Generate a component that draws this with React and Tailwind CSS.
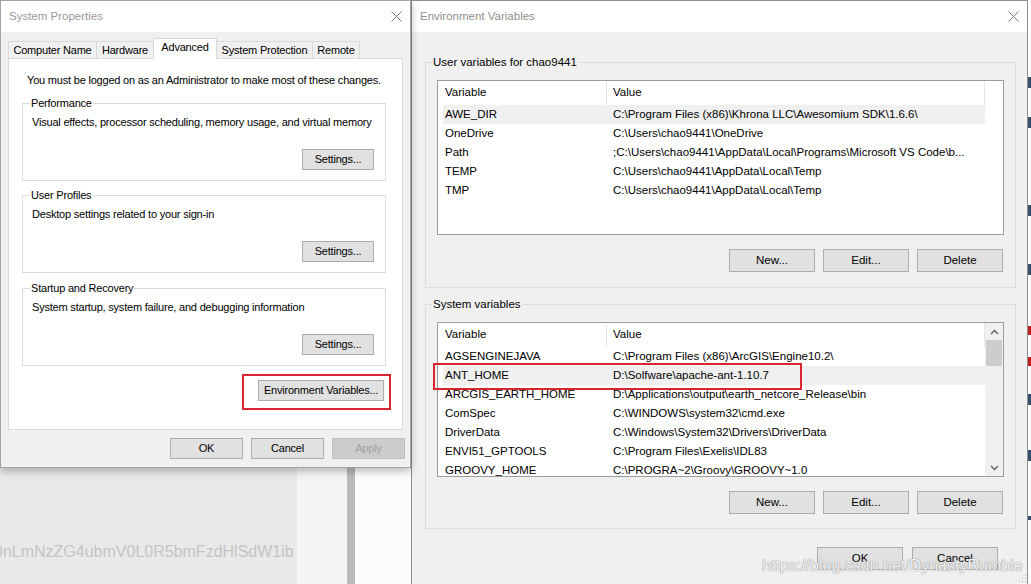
import React from "react";

const userVars = [
  ["AWE_DIR", String.raw`C:\Program Files (x86)\Khrona LLC\Awesomium SDK\1.6.6\ `.trim(), true],
  ["OneDrive", String.raw`C:\Users\chao9441\OneDrive`, false],
  ["Path", String.raw`;C:\Users\chao9441\AppData\Local\Programs\Microsoft VS Code\b...`, false],
  ["TEMP", String.raw`C:\Users\chao9441\AppData\Local\Temp`, false],
  ["TMP", String.raw`C:\Users\chao9441\AppData\Local\Temp`, false],
];

const sysVars = [
  ["AGSENGINEJAVA", String.raw`C:\Program Files (x86)\ArcGIS\Engine10.2\ `.trim(), false],
  ["ANT_HOME", String.raw`D:\Solfware\apache-ant-1.10.7`, true],
  ["ARCGIS_EARTH_HOME", String.raw`D:\Applications\output\earth_netcore_Release\bin`, false],
  ["ComSpec", String.raw`C:\WINDOWS\system32\cmd.exe`, false],
  ["DriverData", String.raw`C:\Windows\System32\Drivers\DriverData`, false],
  ["ENVI51_GPTOOLS", String.raw`C:\Program Files\Exelis\IDL83`, false],
  ["GROOVY_HOME", String.raw`C:\PROGRA~2\Groovy\GROOVY~1.0`, false],
];

function CloseX() {
  return (
    <svg width="11" height="11" viewBox="0 0 11 11" className="block">
      <path d="M0.5 0.5 L10.5 10.5 M10.5 0.5 L0.5 10.5" stroke="#7a7a7a" strokeWidth="1" fill="none" />
    </svg>
  );
}

function Chevron({ up }) {
  return (
    <svg width="9" height="6" viewBox="0 0 9 6" className="block">
      <path
        d={up ? "M1 5 L4.5 1.5 L8 5" : "M1 1 L4.5 4.5 L8 1"}
        stroke="#606060"
        strokeWidth="1.3"
        fill="none"
      />
    </svg>
  );
}

function SysGroup({ title, desc, className }) {
  return (
    <div className={"ml-[13px] w-[364px] h-[78px] border border-[#dcdcdc] flex flex-col " + className}>
      <div className="-mt-[8px] h-[14px] leading-[14px] pl-[7px]">
        <span className="bg-white px-[1px]">{title}</span>
      </div>
      <div className="mt-[5px] pl-[9px] leading-[14px] whitespace-nowrap">{desc}</div>
      <div className="mt-auto mb-[10px] self-end mr-[11px] w-[72px] h-[21px] bg-[#e1e1e1] border border-[#adadad] flex items-center justify-center">
        Settings...
      </div>
    </div>
  );
}

function SystemProperties() {
  return (
    <div className="relative z-10 h-[468px] border border-[#a3a3a3] bg-[#f0f0f0] flex flex-col shadow-[0_3px_8px_rgba(0,0,0,0.28)]">
      <div className="h-[31px] bg-white flex items-center justify-between pl-[8px] pr-[8px] text-[11.5px] text-[#999999]">
        <span>System Properties</span>
        <CloseX />
      </div>
      <div className="flex-1 pt-[6px] pl-[7px] text-[11px] tracking-[-0.2px] flex flex-col">
        <div className="flex items-end h-[20px]">
          <div className="w-[88px] h-[17px] border-t border-l border-[#d9d9d9] flex items-center justify-center">Computer Name</div>
          <div className="w-[57px] h-[17px] border-t border-l border-[#d9d9d9] flex items-center justify-center">Hardware</div>
          <div className="relative z-10 w-[64px] h-[21px] -mb-[1px] border-t border-l border-r border-[#d9d9d9] bg-white flex items-center justify-center pb-[3px]">Advanced</div>
          <div className="w-[96px] h-[17px] border-t border-r border-[#d9d9d9] flex items-center justify-center">System Protection</div>
          <div className="w-[47px] h-[17px] border-t border-r border-[#d9d9d9] flex items-center justify-center">Remote</div>
        </div>
        <div className="w-[395px] h-[372px] border border-[#d9d9d9] bg-white flex flex-col">
          <div className="mt-[14px] ml-[18px] leading-[14px] whitespace-nowrap">
            You must be logged on as an Administrator to make most of these changes.
          </div>
          <SysGroup className="mt-[16px]" title="Performance" desc="Visual effects, processor scheduling, memory usage, and virtual memory" />
          <SysGroup className="mt-[14px]" title="User Profiles" desc="Desktop settings related to your sign-in" />
          <SysGroup className="mt-[15px]" title="Startup and Recovery" desc="System startup, system failure, and debugging information" />
          <div className="self-end mt-[8px] mr-[11px] border-2 border-[#d7262e] pl-[14px] pr-[5px] pt-[4px] pb-[7px]">
            <div className="w-[126px] h-[21px] bg-[#e1e1e1] border border-[#adadad] flex items-center justify-center">
              Environment Variables...
            </div>
          </div>
        </div>
        <div className="mt-[8px] pr-[5px] flex justify-end gap-[8px]">
          <div className="w-[73px] h-[21px] bg-[#e1e1e1] border border-[#adadad] flex items-center justify-center">OK</div>
          <div className="w-[73px] h-[21px] bg-[#e1e1e1] border border-[#adadad] flex items-center justify-center">Cancel</div>
          <div className="w-[73px] h-[21px] bg-[#cccccc] border border-[#bfbfbf] text-[#a0a0a0] flex items-center justify-center">Apply</div>
        </div>
      </div>
    </div>
  );
}

function VarList({ rows, scroll, marked }) {
  return (
    <div className="relative mt-[11px] ml-[11px] w-[567px] h-[155px] border border-[#9c9c9c] bg-white flex pl-[5px]">
      <div className="w-[542px] flex flex-col overflow-hidden">
        <div className="h-[24px] shrink-0 flex">
          <div className="w-[164px] border-r border-[#e5e5e5] pl-[2px] flex items-center">Variable</div>
          <div className="flex-1 border-r border-[#e5e5e5] pl-[6px] flex items-center">Value</div>
        </div>
        {rows.map(([k, v, hi]) => (
          <div key={k} className={"h-[19px] shrink-0 flex items-center whitespace-nowrap " + (hi ? "bg-[#f0f0f0]" : "")}>
            <div className="w-[164px] pl-[2px]">{k}</div>
            <div className="flex-1 pl-[6px] overflow-hidden">{v}</div>
          </div>
        ))}
      </div>
      {scroll ? (
        <div className="w-[18px] bg-[#f0f0f0] flex flex-col">
          <div className="h-[17px] flex items-center justify-center">
            <Chevron up />
          </div>
          <div className="mx-[1px] h-[26px] bg-[#cdcdcd]" />
          <div className="flex-1" />
          <div className="h-[17px] flex items-center justify-center">
            <Chevron />
          </div>
        </div>
      ) : (
        <div className="w-[18px]" />
      )}
      {marked ? (
        <div className="absolute left-[-5px] top-[40px] w-[369px] h-[27px] border-2 border-[#d7262e]" />
      ) : null}
    </div>
  );
}

function ActionRow() {
  return (
    <div className="mt-[14px] mr-[12px] flex justify-end gap-[8px]">
      <div className="w-[86px] h-[23px] bg-[#e1e1e1] border border-[#adadad] flex items-center justify-center">New...</div>
      <div className="w-[86px] h-[23px] bg-[#e1e1e1] border border-[#adadad] flex items-center justify-center">Edit...</div>
      <div className="w-[86px] h-[23px] bg-[#e1e1e1] border border-[#adadad] flex items-center justify-center">Delete</div>
    </div>
  );
}

function EnvDialog() {
  return (
    <div className="w-[617px] h-[584px] shrink-0 border-l border-t border-r border-[#8f8f8f] bg-[#f0f0f0] flex flex-col">
      <div className="h-[31px] bg-white flex items-center justify-between pl-[8px] pr-[8px] text-[11.5px] text-[#8f8f8f]">
        <span>Environment Variables</span>
        <CloseX />
      </div>
      <div className="flex-1 flex flex-col text-[11.5px]">
        <div className="mt-[30px] ml-[13px] w-[591px] h-[226px] border border-[#dcdcdc] flex flex-col">
          <div className="-mt-[8px] h-[14px] leading-[14px] pl-[6px]">
            <span className="bg-[#f0f0f0] px-[1px]">User variables for chao9441</span>
          </div>
          <VarList rows={userVars} />
          <ActionRow />
        </div>
        <div className="mt-[16px] ml-[13px] w-[591px] h-[225px] border border-[#dcdcdc] flex flex-col">
          <div className="-mt-[8px] h-[14px] leading-[14px] pl-[6px]">
            <span className="bg-[#f0f0f0] px-[1px]">System variables</span>
          </div>
          <VarList rows={sysVars} scroll marked />
          <ActionRow />
        </div>
        <div className="mt-[18px] pr-[29px] flex justify-end gap-[9px]">
          <div className="w-[86px] h-[23px] bg-[#e1e1e1] border border-[#adadad] flex items-center justify-center">OK</div>
          <div className="w-[86px] h-[23px] bg-[#e1e1e1] border border-[#adadad] flex items-center justify-center">Cancel</div>
        </div>
      </div>
    </div>
  );
}

function Strip() {
  return (
    <div className="w-[3px] shrink-0 flex flex-col bg-white">
      <div className="h-[77px]" />
      <div className="h-[11px] bg-[#34506e]" />
      <div className="h-[29px]" />
      <div className="h-[11px] bg-[#34506e]" />
      <div className="h-[77px]" />
      <div className="h-[11px] bg-[#34506e]" />
      <div className="h-[48px]" />
      <div className="h-[11px] bg-[#34506e]" />
      <div className="h-[51px]" />
      <div className="h-[9px] bg-[#c41f1f]" />
      <div className="h-[22px]" />
      <div className="h-[9px] bg-[#c41f1f]" />
      <div className="h-[28px]" />
      <div className="h-[11px] bg-[#34506e]" />
      <div className="h-[45px]" />
      <div className="h-[11px] bg-[#34506e]" />
      <div className="h-[55px]" />
      <div className="h-[4px] bg-[#34506e]" />
    </div>
  );
}

export default function App() {
  return (
    <div className="relative flex w-[1031px] h-[584px] overflow-hidden bg-white font-['Liberation_Sans',Arial,sans-serif] text-black leading-none">
      <div className="w-[411px] shrink-0 flex flex-col">
        <SystemProperties />
        <div className="flex-1 flex">
          <div className="w-[297px] bg-[#e9e9e9] overflow-hidden">
            <div className="pt-[75px] -ml-[6px] text-[16px] leading-[18px] text-[#c4c4c4] whitespace-nowrap">
              9nLmNzZG4ubmV0L0R5bmFzdHlSdW1ib
            </div>
          </div>
          <div className="w-[50px] bg-[#f5f5f5]" />
          <div className="w-[8px] bg-[#bababa]" />
          <div className="flex-1 bg-[#fcfcfc]" />
        </div>
      </div>
      <EnvDialog />
      <Strip />
      <div className="absolute left-[762px] top-[557px] text-[16px] leading-[18px] text-white/90 whitespace-nowrap [text-shadow:0_0_1px_#8a8a8a,0_0_1px_#8a8a8a]">
        https://blog.csdn.net/DynastyRumble
      </div>
      <svg className="absolute left-[1019px] top-[575px]" width="8" height="8" viewBox="0 0 8 8">
        <rect x="6" y="0" width="1" height="1" fill="#b5b5b5" />
        <rect x="3" y="3" width="1" height="1" fill="#b5b5b5" />
        <rect x="6" y="3" width="1" height="1" fill="#b5b5b5" />
        <rect x="0" y="6" width="1" height="1" fill="#b5b5b5" />
        <rect x="3" y="6" width="1" height="1" fill="#b5b5b5" />
        <rect x="6" y="6" width="1" height="1" fill="#b5b5b5" />
      </svg>
    </div>
  );
}
